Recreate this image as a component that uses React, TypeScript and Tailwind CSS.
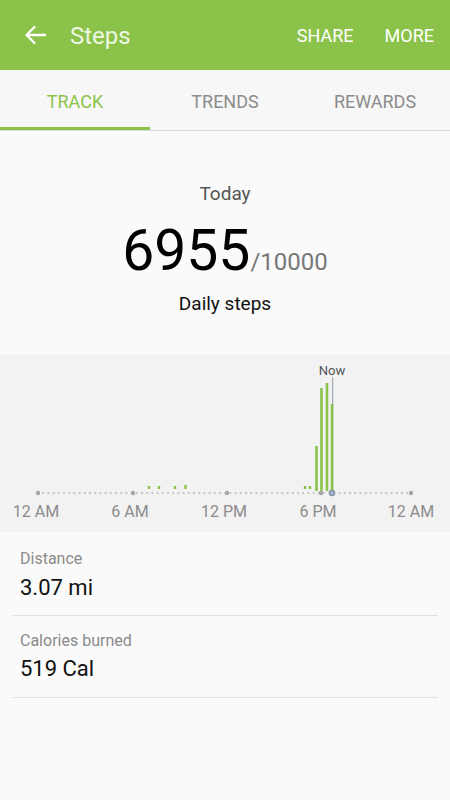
import React from 'react';

const GREEN = '#8bc34a';

// hourly bars near "now" (x, top y)
const bars = [
  { x: 316.5, top: 446 },
  { x: 321.5, top: 388 },
  { x: 327, top: 383 },
  { x: 332, top: 404 },
];

const smallDots = [149, 159, 175, 185.5, 305, 310];

const axisTicks = [
  { x: 38, label: '12 AM' },
  { x: 133, label: '6 AM' },
  { x: 227, label: '12 PM' },
  { x: 321, label: '6 PM' },
  { x: 411, label: '12 AM' },
];

const StepsChart: React.FC = () => {
  const minor: number[] = [];
  for (let x = 38; x <= 411; x += 5.2) minor.push(x);

  return (
    <svg width="450" height="177" viewBox="0 355 450 177" className="block">
      {minor.map((x) => (
        <circle key={x} cx={x} cy={493} r={1} fill="#b9b9b9" />
      ))}
      {axisTicks.map((t) => (
        <circle key={t.x} cx={t.x} cy={493} r={2.2} fill="#a6a6a6" />
      ))}
      {smallDots.map((x) => (
        <rect key={x} x={x - 1.2} y={x === 185.5 ? 485 : 486} width={2.4} height={x === 185.5 ? 4 : 3} fill={GREEN} />
      ))}
      <line x1={332.7} y1={377} x2={332.7} y2={493} stroke="#8a9aa6" strokeWidth={1} />
      {bars.map((b) => (
        <rect key={b.x} x={b.x - 1.3} y={b.top} width={2.6} height={491 - b.top} fill={GREEN} />
      ))}
      <circle cx={332} cy={493} r={3.2} fill="#7f95a6" />
      <circle cx={332} cy={493} r={1.4} fill="#b8c6d1" />
      <text x={332} y={375} textAnchor="middle" fontSize="13" fill="#4f5559" fontFamily="Roboto, sans-serif">
        Now
      </text>
      {axisTicks.map((t, i) => (
        <text
          key={t.label + i}
          x={i === 0 ? 36 : i === 4 ? 411 : t.x - 3}
          y={517}
          textAnchor="middle"
          fontSize="16"
          fill="#8c8c8c"
          fontFamily="Roboto, sans-serif"
        >
          {t.label}
        </text>
      ))}
    </svg>
  );
};

const App: React.FC = () => {
  return (
    <div className="w-[450px] h-[800px] bg-[#fafafa] font-['Roboto',sans-serif] overflow-hidden">
      {/* top bar */}
      <div className="h-[70px] bg-[#8bc34a] flex items-center">
        <svg width="22" height="20" viewBox="0 0 22 20" className="ml-[24px]">
          <path d="M21 10H2.5M10.5 2L2.5 10l8 8" stroke="#fff" strokeWidth="2.3" fill="none" strokeLinecap="round" strokeLinejoin="round" />
        </svg>
        <span className="ml-[24px] pt-[2px] text-[24px] text-[#eef7e4]">Steps</span>
        <div className="ml-auto flex items-center gap-[31px] pr-[16px] text-[18px] text-white">
          <span>SHARE</span>
          <span>MORE</span>
        </div>
      </div>

      {/* tabs */}
      <div className="h-[61px] bg-[#f7f7f7] flex border-b border-[#dcdcdc]">
        <div className="w-[150px] flex flex-col">
          <div className="flex-1 flex items-center justify-center pt-[5px] text-[18px] text-[#8bc34a]">TRACK</div>
          <div className="h-[3px] bg-[#8bc34a]" />
        </div>
        <div className="w-[150px] flex items-center justify-center pt-[2px] text-[18px] text-[#8c8c8c]">TRENDS</div>
        <div className="w-[150px] flex items-center justify-center pt-[2px] text-[18px] text-[#8c8c8c]">REWARDS</div>
      </div>

      {/* today summary */}
      <div className="h-[224px] flex flex-col items-center pt-[51px]">
        <div className="text-[19px] leading-[24px] text-[#555]">Today</div>
        <div className="mt-[13px] flex items-baseline">
          <span className="text-[57px] leading-[64px] text-black">6955</span>
          <span className="text-[24px] text-[#777]">/10000</span>
        </div>
        <div className="mt-[9px] text-[19px] leading-[24px] text-[#111]">Daily steps</div>
      </div>

      {/* chart */}
      <div className="bg-[#f2f2f2]">
        <StepsChart />
      </div>

      {/* stats */}
      <div className="px-3">
        <div className="px-2 pt-[17px] pb-[13px] border-b border-[#e2e2e2]">
          <div className="text-[16px] leading-[20px] text-[#8a8a8a]">Distance</div>
          <div className="mt-[5px] text-[22px] leading-[28px] text-[#111]">3.07 mi</div>
        </div>
        <div className="px-2 pt-[15px] pb-[14px] border-b border-[#e2e2e2]">
          <div className="text-[16px] leading-[20px] text-[#8a8a8a]">Calories burned</div>
          <div className="mt-[4px] text-[22px] leading-[28px] text-[#111]">519 Cal</div>
        </div>
      </div>
    </div>
  );
};

export default App;
